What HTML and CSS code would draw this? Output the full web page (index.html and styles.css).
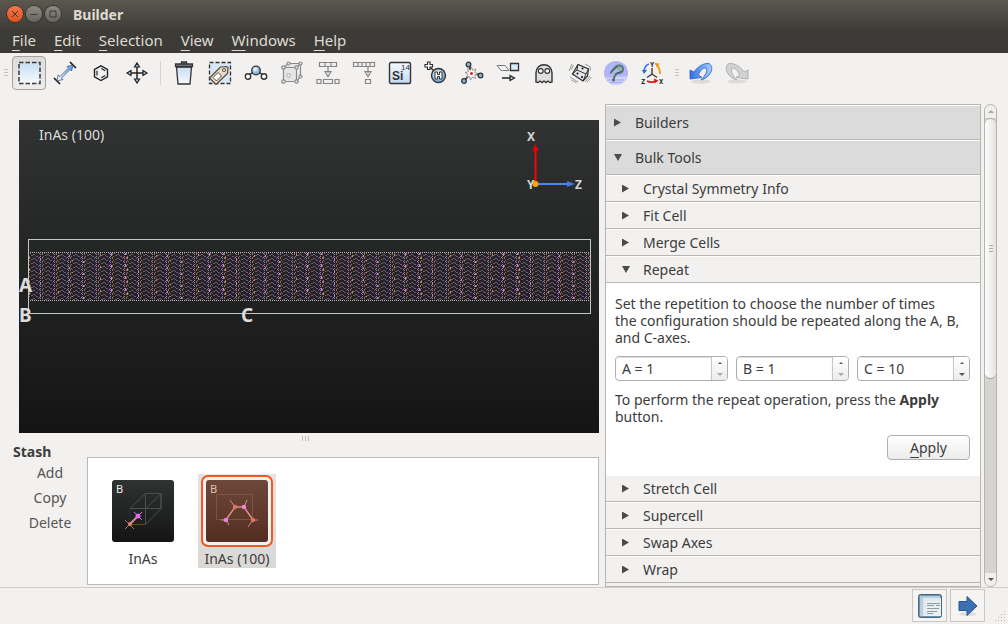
FILE: index.html
```html
<!DOCTYPE html>
<html lang="en">
  <head>
    <meta charset="UTF-8" />
    <title>Builder</title>
    <link rel="stylesheet" href="styles.css">
  </head>
  <body>
    <header class="titlebar">
      <button class="win-btn close" aria-label="Close">
        <svg width="16" height="16" viewBox="0 0 16 16"><path d="M5 5l6 6M11 5l-6 6" /></svg>
      </button>
      <button class="win-btn" aria-label="Minimize">
        <svg width="16" height="16" viewBox="0 0 16 16"><path d="M4.500 8.500h7" /></svg>
      </button>
      <button class="win-btn" aria-label="Maximize">
        <svg width="16" height="16" viewBox="0 0 16 16"><path d="M5 5h6v6H5z" /></svg>
      </button>
      <h1>Builder</h1>
    </header>

    <nav class="menubar">
      <button><u>F</u>ile</button>
      <button><u>E</u>dit</button>
      <button><u>S</u>election</button>
      <button><u>V</u>iew</button>
      <button><u>W</u>indows</button>
      <button><u>H</u>elp</button>
    </nav>

    <div class="toolbar">
      <svg class="handle first" width="4" height="10" viewBox="0 0 4 10"><path d="M0 1.500h4M0 4.500h4M0 7.500h4" stroke="#c4c2c0" /></svg>
      <button class="tool active" aria-label="Select">
        <svg viewBox="0 0 24 24"><rect x="2" y="1.500" width="21" height="21" fill="url(#sky)" stroke="#3a3a3a" stroke-width="1.500" stroke-dasharray="4.500 2" /></svg>
      </button>
      <button class="tool" aria-label="Measure">
        <svg viewBox="0 0 24 24"><path d="M17 1l6 6M1 17l6 6" stroke="#111" stroke-width="1.500" /><path d="M4 20l1-6 2 1.500L15.500 7 14 5.500 20 4l-1.500 6L17 8.500 8.500 17l1.500 1.500z" fill="url(#measure)" stroke="#44597a" stroke-width=".8" /></svg>
      </button>
      <button class="tool" aria-label="Ring">
        <svg viewBox="0 0 24 24"><path d="M12 4.800l6.500 3.700v7.300L12 19.500l-6.500-3.700V8.500z" fill="none" stroke="#222" stroke-width="1.400" /><path d="M8 9.800v4.800M12.300 7.500l4 2.300M12.300 16.800l4-2.300" fill="none" stroke="#222" stroke-width="1.200" /></svg>
      </button>
      <button class="tool" aria-label="Move">
        <svg viewBox="0 0 24 24"><path d="M12 5v14M5 12h14" stroke="#222" stroke-width="1.500" /><path d="M12 2l2.500 4h-5zM12 22l-2.500-4h5zM2 12l4-2.500v5zM22 12l-4 2.500v-5z" fill="#a9cfe8" stroke="#222" stroke-width="1.200" /></svg>
      </button>
      <span class="separator"></span>
      <button class="tool" aria-label="Delete">
        <svg viewBox="0 0 24 24"><path d="M4.500 6h15l-1.500 17H6z" fill="url(#sky)" stroke="#333" stroke-width="1.300" /><path d="M3.500 3h17v2.500h-17zM9.500 3V1h5v2" fill="#889" stroke="#333" stroke-width="1.300" /></svg>
      </button>
      <button class="tool" aria-label="Tag selection">
        <svg viewBox="0 0 24 24"><rect x="1.500" y="1.500" width="21" height="21" fill="#d7e7f6" stroke="#333" stroke-width="1.300" stroke-dasharray="4 2" /><path d="M1.500 17L12.500 6l6-.5 1.500 1-.5 6L8 23.500z" fill="#e9d9c8" stroke="#55483c" stroke-width="1.200" /><path d="M5 16.500l5-5 3.500 3.500-5 5z" fill="#fff" stroke="#55483c" /><circle cx="16" cy="9" r="1.500" fill="#fff" stroke="#55483c" /></svg>
      </button>
      <button class="tool" aria-label="Bond">
        <svg viewBox="0 0 24 24"><path d="M4 15l8-6 8 6" fill="none" stroke="#333" stroke-width="1.500" /><circle cx="12" cy="9.500" r="4.300" fill="url(#ball)" stroke="#333" stroke-width="1.300" /><circle cx="4" cy="15.500" r="2.700" fill="#fff" stroke="#333" stroke-width="1.400" /><circle cx="20" cy="15.500" r="2.700" fill="#fff" stroke="#333" stroke-width="1.400" /></svg>
      </button>
      <button class="tool" aria-label="Unit cell">
        <svg viewBox="0 0 24 24" fill="#eee" stroke="#8a8a8a" stroke-width="1.200"><path d="M3.500 6.500h13v14h-13zM3.500 6.500l5-4h12l-4 4M20.500 2.500v13l-4 5" fill="#e6e6e6" /><circle cx="8.500" cy="14.500" r="1.800" stroke="#bbb" /><circle cx="3.500" cy="6.500" r="1.700" /><circle cx="16.500" cy="6.500" r="1.700" /><circle cx="3.500" cy="20.500" r="1.700" /><circle cx="16.500" cy="20.500" r="1.700" /><circle cx="8.500" cy="2.500" r="1.500" /><circle cx="20.500" cy="2.500" r="1.500" /><circle cx="20.500" cy="15.500" r="1.500" /></svg>
      </button>
      <button class="tool" aria-label="Split">
        <svg viewBox="0 0 24 24" fill="#f2f1f0" stroke="#858585" stroke-width="1.200"><path d="M3.500 1.500h17v4h-17zM9 1.500v4M15 1.500v4M12 6v6M9 10.500h6l-3 5zM1 18.500h4v4H1zM7.500 18.500h9v4h-9zM19 18.500h4v4h-4z" /></svg>
      </button>
      <button class="tool" aria-label="Extract">
        <svg viewBox="0 0 24 24" fill="#f2f1f0" stroke="#858585" stroke-width="1.200"><path d="M1.500 1.500h21v4h-21zM6 1.500v4M10 1.500v4M14 1.500v4M18 1.500v4M16 6v6M13 10.500h6l-3 5zM13.500 18.500h5v4h-5z" /></svg>
      </button>
      <button class="tool" aria-label="Element">
        <svg viewBox="0 0 24 24"><rect x="1.500" y="1.500" width="21" height="21" rx="1.500" fill="url(#sky-up)" stroke="#333" stroke-width="1.400" /><text x="4" y="19" class="icon-si">Si</text><text x="13" y="9" class="icon-14">14</text></svg>
      </button>
      <button class="tool" aria-label="Passivate">
        <svg viewBox="0 0 24 24"><path d="M5 5l7 7" stroke="#333" stroke-width="1.500" /><path d="M3.500 1h2.500v2.500h2.500V6H6v2.500H3.500V6H1V3.500h2.500z" fill="#fff" stroke="#333" stroke-width="1.200" /><circle cx="14.500" cy="14.500" r="7" fill="url(#ball)" stroke="#333" stroke-width="1.400" /><path d="M11 11h2.500v2.500h2V11H18v7h-2.500v-2.500h-2V18H11z" fill="#fff" stroke="#333" /></svg>
      </button>
      <button class="tool" aria-label="Optimize">
        <svg viewBox="0 0 24 24"><path d="M11 12L9 3M11 12l10 2M11 12l-7 8" stroke="#333" stroke-width="1.800" /><path d="M11.500 6l1.300 3.500 3.200-1.500-1.300 3.300L18 13l-3.400 1 1 3.500-3.300-1.600L10.500 19l-.8-3.500-3.500.8 1.800-3L5 11.500l3.600-.7L7.500 7.500l3 1.700z" fill="#fff" stroke="#777" stroke-width=".7" /><circle cx="11.500" cy="12.500" r="1.500" fill="#d22" /><circle cx="8.500" cy="3.500" r="2.300" fill="#8bb8dc" stroke="#333" stroke-width="1.300" /><circle cx="20.500" cy="14.500" r="2.300" fill="#8bb8dc" stroke="#333" stroke-width="1.300" /><circle cx="4" cy="20" r="2.300" fill="#8bb8dc" stroke="#333" stroke-width="1.300" /></svg>
      </button>
      <button class="tool" aria-label="Transform">
        <svg viewBox="0 0 24 24"><path d="M1 4.500h8l4 5H5z" fill="#f5f5f5" stroke="#777" /><path d="M14.500 2.500h8v7h-8z" fill="#dcecf8" stroke="#333" stroke-width="1.300" /><path d="M6 17h8" stroke="#222" stroke-width="1.500" /><path d="M14 14.500l4.500 2.500-4.500 2.500z" fill="#a9cfe8" stroke="#222" stroke-width="1.200" /></svg>
      </button>
      <button class="tool" aria-label="Ghost">
        <svg viewBox="0 0 24 24"><path d="M4 21v-9c0-11 16-11 16 0v9l-2 .5-2-1.500-2 1.500-2-1.500-2 1.500-2-1.500-2 1.500z" fill="#dedede" stroke="#333" stroke-width="1.400" /><circle cx="8.700" cy="10" r="2.400" fill="#fff" stroke="#333" stroke-width="1.200" /><circle cx="15.300" cy="10" r="2.400" fill="#fff" stroke="#333" stroke-width="1.200" /></svg>
      </button>
      <button class="tool" aria-label="Rattle">
        <svg viewBox="0 0 24 24"><path d="M4.500 13L10 3.500l10.500 4.500-1 7L15 20z" fill="#e4e8ec" stroke="#333" stroke-width="1.300" /><path d="M10 3.500l-1 5.500L4.500 13M9 9l9 4 2.500-5M18 13l-3 7" fill="none" stroke="#333" /><circle cx="14.500" cy="7.500" r="1" /><circle cx="9.500" cy="12.500" r="1" /><circle cx="14" cy="16" r="1" /><path d="M3 9l2.500-5M1 10l3-7M17 3l5 2.500.5 4M22 15l-5 6M23.500 16L19 21.500M2 16l8 5M3.500 19l5 3" fill="none" stroke="#999" /></svg>
      </button>
      <button class="tool" aria-label="Packmol">
        <svg viewBox="0 0 24 24"><circle cx="12" cy="12" r="12" fill="#b1b5f4" /><path d="M1 17c4-2 5 1 8-1s7 1 14-1c-2 6-6 9-11 9S3 21 1 17z" fill="#d2d5fb" /><path d="M3 19h17M6 21.500h12" stroke="#9296e4" stroke-width=".8" /><path d="M6 12c3-1 4-7 8.500-7.500 6-.5 6 7 0 7.500-3 .5-4 3-5 6" fill="none" stroke="#55786c" stroke-width="2" /><path d="M7 10.500l7-5M11 13l7-3" stroke="#3a5d62" /><circle cx="15" cy="7.500" r="2" fill="#8fb09a" /><circle cx="9.500" cy="19" r="1.500" fill="#4b6778" /></svg>
      </button>
      <button class="tool" aria-label="Swap axes">
        <svg viewBox="0 0 24 24"><path d="M12 7v6l-5 3.500M12 13l5 3.500" fill="none" stroke="#444" stroke-width="1.500" /><path d="M9 3C6 4 4.500 6 4 10" fill="none" stroke="#3b78e7" stroke-width="1.800" /><path d="M2 9h5l-3 4z" fill="#2167d8" /><path d="M20 13c0-4-1-7-3.500-9.500" fill="none" stroke="#f29a1b" stroke-width="1.800" /><path d="M14.500 2l5 .5-2.500 4z" fill="#f59500" /><path d="M7 20c3 1.500 6 1.500 9 0" fill="none" stroke="#e11" stroke-width="1.800" /><path d="M14 17.500l4.500 2-4 3z" fill="#e11" /><text x="10" y="6" class="icon-axis">Y</text><text x="1" y="23" class="icon-axis">Z</text><text x="19" y="23" class="icon-axis">X</text></svg>
      </button>
      <svg class="handle" width="11" height="10" viewBox="0 0 11 10"><path d="M4 1.500h4M4 4.500h4M4 7.500h4" stroke="#c4c2c0" /></svg>
      <button class="tool" aria-label="Undo">
        <svg viewBox="0 0 24 24"><ellipse cx="12" cy="20.500" rx="10" ry="2" fill="#dcdbda" /><path d="M1 9l4 2C9 5 15 2 20 2.500c4 2.500 4 8.500-2 13.500-2 1.500-4 2.500-6 3 4-4 7-9 5-12-4 0-6 3-7.500 7l3.500 2.500L1 18z" fill="url(#undo)" stroke="#2c5fc0" stroke-width=".8" /></svg>
      </button>
      <button class="tool" aria-label="Redo">
        <svg viewBox="0 0 24 24"><ellipse cx="12" cy="20.500" rx="10" ry="2" fill="#dddcdb" /><path d="M23 9l-4 2C15 5 9 2 4 2.500 0 5 0 11 6 16c2 1.500 4 2.500 6 3-4-4-7-9-5-12 4 0 6 3 7.500 7L11 16.500 23 18z" fill="#d2d2d2" stroke="#a5a5a5" stroke-width=".8" /></svg>
      </button>
    </div>

    <main class="workspace">
      <section class="left">
        <svg class="viewer" viewBox="0 0 580 313" role="img" aria-label="InAs (100) configuration">
          <defs>
            <linearGradient id="backdrop" x2="0" y2="1"><stop offset="0" stop-color="#303332" /><stop offset="1" stop-color="#141414" /></linearGradient>
            <linearGradient id="brown" x2="0" y2="1"><stop offset="0" stop-color="#6c483a" /><stop offset="1" stop-color="#532d21" /></linearGradient>
            <linearGradient id="sky" x2="0" y2="1"><stop offset="0" stop-color="#c8def5" /><stop offset="1" stop-color="#f6fafe" /></linearGradient>
            <linearGradient id="sky-up" x2="0" y2="1"><stop offset="0" stop-color="#f6fafe" /><stop offset="1" stop-color="#c0d9f2" /></linearGradient>
            <linearGradient id="measure" x2="1" y2="0"><stop offset="0" stop-color="#fff" /><stop offset="1" stop-color="#4f9df5" /></linearGradient>
            <linearGradient id="undo" x2="1" y2="0"><stop offset="0" stop-color="#2f6fe8" /><stop offset="1" stop-color="#a5cdfa" /></linearGradient>
            <radialGradient id="ball" cx=".4" cy=".35"><stop offset="0" stop-color="#f4f9fe" /><stop offset="1" stop-color="#7fb0dc" /></radialGradient>
            <!-- bonds of the crystal seen edge on -->
            <pattern id="bonds" width="14" height="8" patternUnits="userSpaceOnUse">
              <g shape-rendering="crispEdges">
                <path d="M7 0h1v1h-1zM7 2h1v1h-1zM7 4h1v1h-1zM7 6h1v1h-1zM6 1h1v1h-1zM6 5h1v1h-1z" fill="#a773bd" />
                <path d="M9 1h1v2h-1zM9 5h1v2h-1zM10 0h1v1h-1zM10 4h1v1h-1z" fill="#99695f" />
                <path d="M0 2h2v1h-2zM2 3h1v1h-1zM3 4h2v1h-2zM0 6h2v1h-2zM2 7h1v1h-1zM3 0h2v1h-2z" fill="#76528a" />
                <path d="M12 3h2v1h-2zM12 7h2v1h-2zM11 5h1v1h-1zM5 2h1v1h-1z" fill="#775859" />
              </g>
            </pattern>
            <pattern id="columns" width="98" height="12" patternUnits="userSpaceOnUse">
              <g shape-rendering="crispEdges">
                <path d="M8 0h1v3h-1zM21 7h1v2h-1zM50 3h1v2h-1zM64 9h1v2h-1zM92 1h1v3h-1z" fill="#c681df" />
                <path d="M10 5h1v2h-1zM39 3h1v2h-1zM53 8h1v1h-1zM81 2h1v2h-1z" fill="#c5866f" />
                <path d="M16 2h1v3h-1zM29 7h1v1h-1zM44 8h1v3h-1zM72 4h1v1h-1z" fill="#282b2b" />
              </g>
            </pattern>
          </defs>
          <rect width="580" height="313" fill="url(#backdrop)" />
          <text x="20" y="20" class="viewer-title">InAs (100)</text>
          <rect x="10" y="133" width="561" height="47" fill="url(#bonds)" />
          <rect x="10" y="133" width="561" height="47" fill="url(#columns)" />
          <path d="M11 132.500h560M11 180.500h560" stroke="#b5b7b5" stroke-dasharray="1 1" />
          <rect x="9.500" y="119.500" width="562" height="74" fill="none" stroke="#c4c7c4" />
          <path d="M516.500 64V30" stroke="#f00" stroke-width="2" />
          <path d="M513.500 31l3-7 3 7z" fill="#e00" />
          <path d="M517 64h32" stroke="#4d87f0" stroke-width="2" />
          <path d="M548 61l8 3-8 3z" fill="#3f78ea" />
          <circle cx="516.500" cy="64" r="3" fill="#f5a70a" />
          <g class="axis-label">
            <text x="508" y="21">X</text>
            <text x="508" y="69">Y</text>
            <text x="556" y="69">Z</text>
          </g>
          <g class="cell-label">
            <text x="0" y="172">A</text>
            <text x="0" y="202">B</text>
            <text x="222" y="202">C</text>
          </g>
        </svg>
        <div class="splitter"><span></span><span></span><span></span></div>
        <div class="stash">
          <div class="stash-actions">
            <h2>Stash</h2>
            <button>Add</button>
            <button>Copy</button>
            <button>Delete</button>
          </div>
          <div class="stash-list">
            <button class="stash-item">
              <svg width="72" height="72" viewBox="0 0 72 72">
                <rect x="5" y="5" width="62" height="62" rx="3" fill="url(#backdrop)" />
                <g fill="none" stroke="#4d4f4e"><path d="M23 33.500h31v-15H38.500L23 33.500M38.500 18.500v31M54 33.500L38.500 49.500M54 18.500v15M54 18.500l-15 15" /><path d="M23 34v15" stroke="#28334f" /><path d="M23 49.500h15" stroke="#694712" /></g>
                <path d="M23 49l8-8" stroke="#d98c7f" stroke-width="2" /><path d="M18 45l9 9M18 54l5-5" stroke="#a9706d" /><path d="M27 37l8 8M35 37l-5 5" stroke="#c272dc" />
                <circle cx="23" cy="49" r="2" fill="#d98872" /><circle cx="31" cy="41" r="2.500" fill="#d56cf0" />
                <text x="9" y="18" class="tile-letter">B</text>
              </svg>
              <span>InAs</span>
            </button>
            <button class="stash-item selected">
              <svg width="72" height="72" viewBox="0 0 72 72">
                <rect x="1" y="1" width="70" height="70" rx="6" fill="#f2f1f0" stroke="#f2581f" stroke-width="2" />
                <rect x="5" y="5" width="62" height="62" rx="3" fill="url(#brown)" />
                <path d="M15.500 19.500h36v25h-36z" fill="none" stroke="#795648" />
                <path d="M25 45l9-13h9l9 13" fill="none" stroke="#dc8c8c" stroke-width="1.500" />
                <path d="M25 45h-5M25 45l3 5M34 32l-5-7M43 32l3-7M52 45h5M52 45l-5 7" stroke="#d38596" />
                <circle cx="25" cy="45" r="2.200" fill="#ec86d9" /><circle cx="34" cy="32" r="2.200" fill="#dc755d" /><circle cx="43" cy="32" r="2.200" fill="#ec86d9" /><circle cx="52" cy="45" r="2.200" fill="#dc755d" />
                <text x="9" y="18" class="tile-letter dim">B</text>
              </svg>
              <span>InAs (100)</span>
            </button>
          </div>
        </div>
      </section>

      <aside class="panel">
        <button class="row group">Builders</button>
        <button class="row group open">Bulk Tools</button>
        <button class="row">Crystal Symmetry Info</button>
        <button class="row">Fit Cell</button>
        <button class="row">Merge Cells</button>
        <button class="row open">Repeat</button>
        <form class="repeat">
          <p>Set the repetition to choose the number of times<br>the configuration should be repeated along the A, B,<br>and C-axes.</p>
          <div class="spins">
            <div class="spin">
              <input type="text" value="A = 1" aria-label="Repeat along A">
              <div class="steps">
                <button type="button" class="up" aria-label="Increase A"></button>
                <button type="button" class="down off" aria-label="Decrease A"></button>
              </div>
            </div>
            <div class="spin">
              <input type="text" value="B = 1" aria-label="Repeat along B">
              <div class="steps">
                <button type="button" class="up" aria-label="Increase B"></button>
                <button type="button" class="down off" aria-label="Decrease B"></button>
              </div>
            </div>
            <div class="spin">
              <input type="text" value="C = 10" aria-label="Repeat along C">
              <div class="steps">
                <button type="button" class="up" aria-label="Increase C"></button>
                <button type="button" class="down" aria-label="Decrease C"></button>
              </div>
            </div>
          </div>
          <p>To perform the repeat operation, press the <b>Apply</b><br>button.</p>
          <button type="button" class="apply"><u>A</u>pply</button>
        </form>
        <button class="row">Stretch Cell</button>
        <button class="row">Supercell</button>
        <button class="row">Swap Axes</button>
        <button class="row">Wrap</button>
      </aside>

      <div class="scrollbar">
        <button class="scroll-btn up" aria-label="Scroll up"></button>
        <div class="thumb"><i></i><i></i><i></i></div>
        <div class="track"></div>
        <button class="scroll-btn down" aria-label="Scroll down"></button>
      </div>
    </main>

    <footer class="statusbar">
      <button aria-label="Log">
        <svg width="24" height="24" viewBox="0 0 24 24"><rect x=".5" y=".5" width="23" height="23" rx="2" fill="#6b93ae" stroke="#48687e" /><path d="M2 2h20v18l-2 2H2z" fill="#b9ced9" /><path d="M5 4h18v18H5z" fill="#dfe9ee" /><path d="M8 7h15v15H8z" fill="#eaeff0" /><path d="M9 9.500h13M9 11.500h7M18 11.500h4M9 14.500h12M9 17.500h10M9 19.500h6" stroke="#8d9ba4" /></svg>
      </button>
      <button aria-label="Send">
        <svg width="24" height="24" viewBox="0 0 24 24"><ellipse cx="12" cy="20" rx="9" ry="2" fill="#dedddc" /><path d="M3 7.500h8V2.500l10 9.500-10 9.500v-5H3z" fill="#3d70b2" stroke="#28548f" /></svg>
      </button>
      <svg class="grip" width="11" height="11" viewBox="0 0 11 11"><path d="M9 0h1v1h-1zM6 3h1v1h-1zM9 3h1v1h-1zM3 6h1v1h-1zM6 6h1v1h-1zM9 6h1v1h-1zM0 9h1v1h-1zM3 9h1v1h-1zM6 9h1v1h-1zM9 9h1v1h-1z" fill="#bbb9b7" /></svg>
    </footer>
  </body>
</html>
```
FILE: styles.css
```css
* {
  box-sizing: border-box;
}

body {
  display: flex;
  flex-direction: column;
  height: 100vh;
  margin: 0;
  overflow: hidden;
  background: #f2f1f0;
  color: #3c3c3c;
  font-family: "Noto Sans", "Open Sans", sans-serif;
  font-size: 14px;
  line-height: 17px;
}

button {
  margin: 0;
  padding: 0;
  border: 0;
  background: none;
  color: inherit;
  font: inherit;
}

h1,
h2,
p {
  margin: 0;
}

svg {
  display: block;
  flex: none;
}

u {
  text-underline-offset: 4px;
  text-decoration-skip-ink: none;
}

.titlebar {
  display: flex;
  align-items: center;
  gap: 3px;
  height: 28px;
  padding: 0 7px;
  background: linear-gradient(#5b584f, #3f3e39);
}

.titlebar h1 {
  margin-left: 9px;
  color: #dfdbd2;
  font-size: 14px;
  font-weight: bold;
}

.win-btn {
  border-radius: 50%;
  background: linear-gradient(#8c8a82, #66645d);
  box-shadow: 0 0 0 1px #35342f;
}

.win-btn path {
  fill: none;
  stroke: #3a3934;
  stroke-width: 1;
}

.win-btn.close {
  background: linear-gradient(#f4764e, #e2521f);
}

.menubar {
  display: flex;
  gap: 18px;
  height: 25px;
  padding: 0 12px;
  background: #3c3b37;
  color: #dfdbd2;
  font-size: 15px;
}

.toolbar {
  display: flex;
  align-items: center;
  gap: 2px;
  height: 40px;
  padding: 0 4px;
}

.tool {
  display: flex;
  align-items: center;
  justify-content: center;
  width: 34px;
  height: 34px;
}

.tool svg {
  width: 24px;
  height: 24px;
}

.tool.active {
  border: 1px solid #a6a29f;
  border-radius: 4px;
  background: linear-gradient(#dddbd9, #efeeec);
}

.handle.first {
  margin-right: 2px;
}

.separator {
  width: 9px;
  height: 24px;
  background: linear-gradient(#d5d3d1, #d5d3d1) center / 1px 100% no-repeat;
}

.icon-si {
  font: bold 12px "Liberation Sans", sans-serif;
  fill: #333;
}

.icon-14 {
  font: 8px "Liberation Sans", sans-serif;
  fill: #333;
}

.icon-axis {
  font: bold 7px "DejaVu Sans Mono", monospace;
  fill: #222;
}

.workspace {
  display: flex;
  flex: 1;
  min-height: 0;
  padding: 11px 11px 0 0;
}

.left {
  display: flex;
  flex: 1;
  flex-direction: column;
  min-width: 0;
  padding: 16px 6px 2px 0;
}

.viewer {
  width: calc(100% - 19px);
  margin-left: 19px;
}

.viewer-title {
  font-size: 14px;
  fill: #ddd;
}

.axis-label {
  font: bold 12px "Noto Sans", sans-serif;
  fill: #d5d5d5;
}

.cell-label {
  font: bold 19px "Noto Sans", sans-serif;
  fill: #dcdcdc;
}

.splitter {
  display: flex;
  align-items: center;
  justify-content: center;
  gap: 2px;
  height: 10px;
  padding-left: 12px;
}

.splitter span {
  width: 1px;
  height: 5px;
  background: #bcbab8;
}

.stash {
  display: flex;
  flex: 1;
}

.stash-actions {
  display: flex;
  flex-direction: column;
  width: 87px;
  padding-left: 13px;
}

.stash-actions h2 {
  font-size: 14px;
  line-height: 17px;
}

.stash-actions button {
  height: 25px;
  color: #555;
}

.stash-list {
  display: flex;
  flex: 1;
  align-items: flex-start;
  gap: 16px;
  margin-top: 14px;
  padding: 16px;
  border: 1px solid #bbb9b7;
  background: #fff;
}

.stash-item {
  display: flex;
  flex-direction: column;
  align-items: center;
  gap: 3px;
  width: 78px;
  height: 94px;
  padding-top: 1px;
  white-space: nowrap;
}

.stash-item.selected {
  background: linear-gradient(#e6e4e2, #dad8d5);
}

.tile-letter {
  font-size: 11px;
  fill: #eee;
}

.tile-letter.dim {
  fill: #e3c2b6;
}

.panel {
  display: flex;
  flex-direction: column;
  width: 376px;
  border: 1px solid #b6b5b2;
  background: #f2f1f0;
  overflow: hidden;
}

.row {
  display: flex;
  flex: none;
  align-items: center;
  height: 27px;
  padding-left: 16px;
  border-top: 1px solid #fff;
  border-bottom: 1px solid #b6b5b2;
  text-align: left;
}

.row::before {
  content: "";
  width: 7px;
  height: 8px;
  margin-right: 14px;
  background: #4a4a4a;
  clip-path: polygon(0 0, 100% 50%, 0 100%);
}

.row.open::before {
  width: 8px;
  height: 7px;
  margin-right: 13px;
  clip-path: polygon(0 0, 100% 0, 50% 100%);
}

.row.group {
  height: 35px;
  padding-left: 8px;
  background: #dbdbdb;
}

.repeat {
  flex: none;
  padding: 12px 10px 15px 9px;
  background: #fff;
}

.repeat p {
  white-space: nowrap;
}

.spins {
  display: grid;
  grid-template-columns: 1fr 1fr 1fr;
  gap: 8px;
  margin: 10px 0;
}

.spin {
  display: flex;
  height: 25px;
  border: 1px solid #b0aeab;
  border-radius: 4px;
  background: #fff;
  overflow: hidden;
}

.spin input {
  flex: 1;
  width: 0;
  padding: 0 6px;
  border: 0;
  outline: 0;
  background: none;
  box-shadow: inset 0 1px 1px #ddd;
  color: inherit;
  font: inherit;
}

.steps {
  display: flex;
  flex-direction: column;
  width: 16px;
  border-left: 1px solid #c8c6c4;
  background: linear-gradient(#fff, #ececeb);
}

.steps button {
  display: flex;
  flex: 1;
  align-items: center;
  justify-content: center;
}

.steps button::before,
.scroll-btn::before {
  content: "";
  border: 3px solid transparent;
}

.steps .up::before {
  border-width: 0 2px 2px;
  border-bottom-color: #555;
}

.steps .down::before {
  border-bottom: 0;
  border-top-color: #555;
}

.steps .off::before {
  border-top-color: #aaa;
}

.apply {
  display: block;
  width: 83px;
  height: 25px;
  margin: 10px 0 0 auto;
  border: 1px solid #b0aeab;
  border-radius: 4px;
  background: linear-gradient(#fff, #ececeb);
}

.scrollbar {
  display: flex;
  flex-direction: column;
  width: 13px;
  margin-left: 3px;
  border: 1px solid #b5b3b0;
  border-radius: 7px;
  background: #d6d4d2;
  overflow: hidden;
}

.scroll-btn {
  display: flex;
  align-items: center;
  justify-content: center;
  height: 13px;
  background: #f0efee;
}

.scroll-btn.up::before {
  border-top: 0;
  border-bottom-color: #aaa;
}

.scroll-btn.down::before {
  border-bottom: 0;
  border-top-color: #555;
}

.thumb {
  display: flex;
  flex: 261;
  flex-direction: column;
  align-items: center;
  justify-content: center;
  gap: 2px;
  border: 1px solid #a19e9b;
  border-width: 1px 0;
  border-radius: 6px;
  background: linear-gradient(90deg, #fdfdfd, #e4e3e1);
}

.thumb i {
  width: 4px;
  height: 1px;
  background: #aaa;
}

.track {
  flex: 195;
}

.statusbar {
  display: flex;
  justify-content: flex-end;
  gap: 3px;
  height: 37px;
  padding: 1px 2px 2px;
  border-top: 1px solid #cfcdcb;
}

.statusbar button {
  display: flex;
  align-items: center;
  justify-content: center;
  width: 35px;
  border: 1px solid #c9c7c5;
  background: #f5f4f3;
}

.grip {
  align-self: flex-end;
  margin-left: 7px;
}
```
